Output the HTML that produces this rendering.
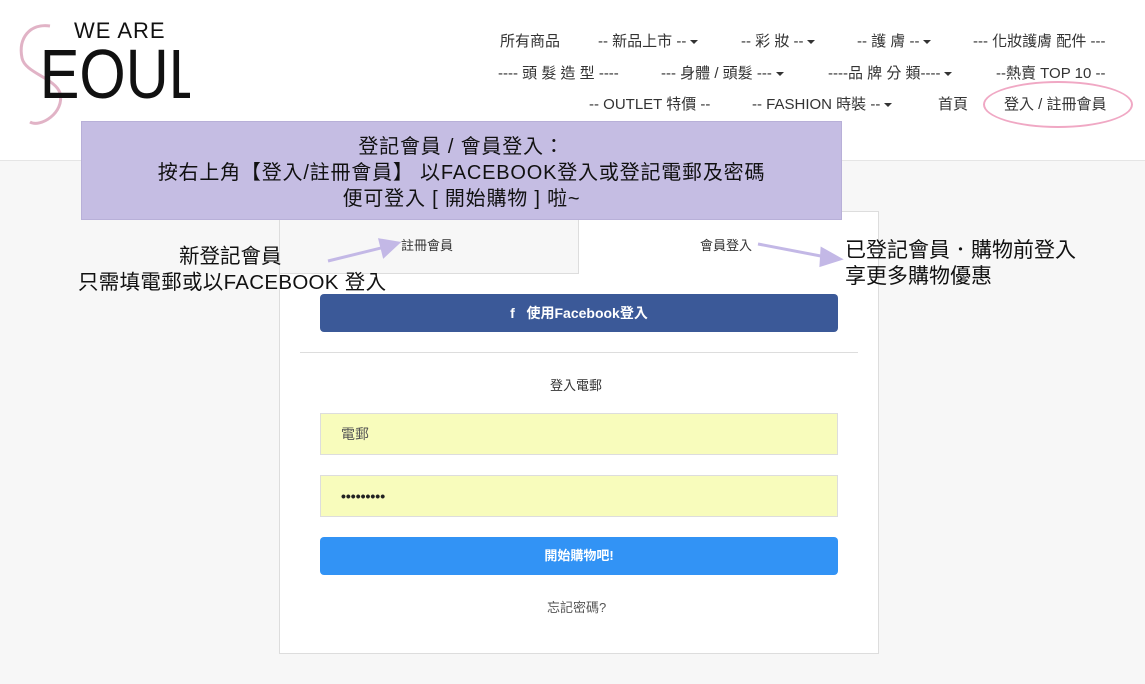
<!DOCTYPE html>
<html><head><meta charset="utf-8"><style>
*{margin:0;padding:0;box-sizing:border-box}
body{width:1145px;height:684px;overflow:hidden;background:#f7f7f7;font-family:"Liberation Sans","Noto Sans CJK TC",sans-serif;color:#333;position:relative}
.hdr{position:absolute;left:0;top:0;width:1145px;height:161px;background:#fff;border-bottom:1px solid #e5e5e5}
.nav{position:absolute;font-size:15px;color:#333;white-space:nowrap}
.ab{position:absolute;white-space:nowrap}
.caret{display:inline-block;width:0;height:0;border-left:4px solid transparent;border-right:4px solid transparent;border-top:4px solid #333;vertical-align:middle;margin-left:4px}
</style></head><body>
<div class="hdr"></div>
<svg class="ab" style="left:10px;top:18px" width="180" height="110" viewBox="0 0 180 110">
<path d="M40 8 C20 5 8 20 12 40 C15 55 45 60 50 75 C55 95 30 110 20 104" fill="none" stroke="#d9a0b8" stroke-width="3" opacity="0.8"/>
<text x="64" y="20" font-family="Liberation Sans" font-size="22" fill="#111" letter-spacing="1">WE ARE</text>
<text x="35" y="80" font-family="Liberation Sans" font-size="70" fill="#111" transform="scale(0.85,1)">EOUL</text>
</svg>
<div class="nav" style="left:500px;top:30px">所有商品</div>
<div class="nav" style="left:598px;top:30px">-- 新品上市 --<span class="caret"></span></div>
<div class="nav" style="left:741px;top:30px">-- 彩 妝 --<span class="caret"></span></div>
<div class="nav" style="left:857px;top:30px">-- 護 膚 --<span class="caret"></span></div>
<div class="nav" style="left:973px;top:30px">--- 化妝護膚 配件 ---</div>
<div class="nav" style="left:498px;top:62px">---- 頭 髮 造 型 ----</div>
<div class="nav" style="left:661px;top:62px">--- 身體 / 頭髮 ---<span class="caret"></span></div>
<div class="nav" style="left:828px;top:62px">----品 牌 分 類----<span class="caret"></span></div>
<div class="nav" style="left:996px;top:62px">--熱賣 TOP 10 --</div>
<div class="nav" style="left:589px;top:93px">-- OUTLET 特價 --</div>
<div class="nav" style="left:752px;top:93px">-- FASHION 時裝 --<span class="caret"></span></div>
<div class="nav" style="left:938px;top:93px">首頁</div>
<div class="nav" style="left:1004px;top:93px">登入 / 註冊會員</div>
<div class="ab" style="left:983px;top:81px;width:150px;height:47px;border:2px solid #f0a8c4;border-radius:50%"></div>
<div class="ab" style="left:279px;top:211px;width:600px;height:443px;background:#fff;border:1px solid #ddd"></div>
<div class="ab" style="left:279px;top:211px;width:300px;height:63px;background:#f7f7f7;border:1px solid #ddd"></div>
<div class="ab" style="left:401px;top:235px;font-size:13px">註冊會員</div>
<div class="ab" style="left:700px;top:235px;font-size:13px">會員登入</div>
<div class="ab" style="left:320px;top:294px;width:518px;height:38px;background:#3b5998;border-radius:4px;color:#fff;font-size:14px;font-weight:bold;text-align:center;line-height:38px">f&nbsp;&nbsp; 使用Facebook登入</div>
<div class="ab" style="left:300px;top:352px;width:558px;border-top:1px solid #ddd"></div>
<div class="ab" style="left:550px;top:375px;font-size:13px">登入電郵</div>
<div class="ab" style="left:320px;top:413px;width:518px;height:42px;background:#f8fcbc;border:1px solid #ddd;font-size:14px;color:#555;padding-left:20px;line-height:40px">電郵</div>
<div class="ab" style="left:320px;top:475px;width:518px;height:42px;background:#f8fcbc;border:1px solid #ddd;font-size:14px;color:#222;padding-left:20px;line-height:40px;font-weight:bold">•••••••••</div>
<div class="ab" style="left:320px;top:537px;width:518px;height:38px;background:#3293f5;border-radius:4px;color:#fff;font-size:13px;font-weight:bold;text-align:center;line-height:38px">開始購物吧!</div>
<div class="ab" style="left:547px;top:597px;font-size:13px;color:#555">忘記密碼?</div>
<div class="ab" style="left:81px;top:121px;width:761px;height:99px;background:#c5bde3;border:1px solid #b8b0d8;text-align:center;font-size:20px;line-height:26px;padding-top:12px;color:#111;letter-spacing:0.8px">登記會員 / 會員登入：<br>按右上角【登入/註冊會員】 以FACEBOOK登入或登記電郵及密碼<br>便可登入 [ 開始購物 ] 啦~</div>
<div class="ab" style="left:179px;top:239px;font-size:20.5px;color:#111">新登記會員</div>
<div class="ab" style="left:78px;top:265px;font-size:20.5px;color:#111;letter-spacing:0.3px">只需填電郵或以FACEBOOK 登入</div>
<div class="ab" style="left:845px;top:234px;font-size:21px;color:#111">已登記會員．購物前登入</div>
<div class="ab" style="left:845px;top:260px;font-size:21px;color:#111">享更多購物優惠</div>
<svg class="ab" style="left:0;top:0" width="1145" height="684">
<g stroke="#c3b8e6" stroke-width="3" fill="#c3b8e6">
<line x1="328" y1="261" x2="385" y2="247"/><polygon points="398,243 380,240 384,256"/>
<line x1="758" y1="244" x2="826" y2="257"/><polygon points="840,259 822,249 821,265"/>
</g></svg>
</body></html>
